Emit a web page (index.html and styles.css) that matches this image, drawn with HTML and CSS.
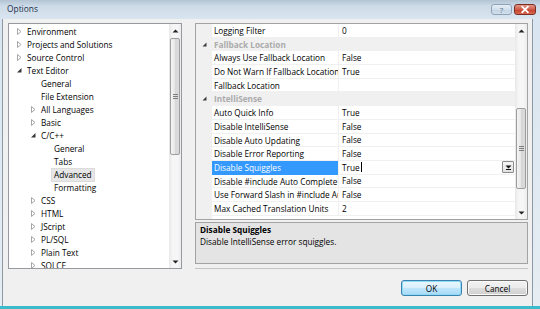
FILE: index.html
```html
<!DOCTYPE html>
<html>
<head>
<meta charset="utf-8">
<title>Options</title>
<link rel="stylesheet" href="styles.css">
</head>
<body>
<div class="window">
  <div class="titlebar">
    <span class="title">Options</span>
    <div class="caption-btns">
      <div class="cbtn help">?</div>
      <div class="cbtn close">
        <svg width="22" height="11" viewBox="0 0 22 11"><path d="M8 2.5 L14 8.5 M14 2.5 L8 8.5" stroke="#fff" stroke-width="2" stroke-linecap="square"/></svg>
      </div>
    </div>
  </div>
  <div class="frame">
    <div class="client">
      <div class="main">
        <div class="tree">
          <div class="tree-list">
            <div class="node l0"><svg class="tw" viewBox="0 0 12 13"><path d="M2.5 3.5 L6 6.5 L2.5 9.5 Z" fill="#fff" stroke="#a6a6a6"/></svg><span class="lbl">Environment</span></div>
            <div class="node l0"><svg class="tw" viewBox="0 0 12 13"><path d="M2.5 3.5 L6 6.5 L2.5 9.5 Z" fill="#fff" stroke="#a6a6a6"/></svg><span class="lbl">Projects and Solutions</span></div>
            <div class="node l0"><svg class="tw" viewBox="0 0 12 13"><path d="M2.5 3.5 L6 6.5 L2.5 9.5 Z" fill="#fff" stroke="#a6a6a6"/></svg><span class="lbl">Source Control</span></div>
            <div class="node l0"><svg class="tw" viewBox="0 0 12 13"><path d="M6.5 4 L6.5 8.5 L2 8.5 Z" fill="#3a3a3a"/></svg><span class="lbl">Text Editor</span></div>
            <div class="node l1"><span class="tw"></span><span class="lbl">General</span></div>
            <div class="node l1"><span class="tw"></span><span class="lbl">File Extension</span></div>
            <div class="node l1"><svg class="tw" viewBox="0 0 12 13"><path d="M2.5 3.5 L6 6.5 L2.5 9.5 Z" fill="#fff" stroke="#a6a6a6"/></svg><span class="lbl">All Languages</span></div>
            <div class="node l1"><svg class="tw" viewBox="0 0 12 13"><path d="M2.5 3.5 L6 6.5 L2.5 9.5 Z" fill="#fff" stroke="#a6a6a6"/></svg><span class="lbl">Basic</span></div>
            <div class="node l1"><svg class="tw" viewBox="0 0 12 13"><path d="M6.5 4 L6.5 8.5 L2 8.5 Z" fill="#3a3a3a"/></svg><span class="lbl">C/C++</span></div>
            <div class="node l2"><span class="tw"></span><span class="lbl">General</span></div>
            <div class="node l2"><span class="tw"></span><span class="lbl">Tabs</span></div>
            <div class="node l2"><span class="tw"></span><span class="lbl selected">Advanced</span></div>
            <div class="node l2"><span class="tw"></span><span class="lbl">Formatting</span></div>
            <div class="node l1"><svg class="tw" viewBox="0 0 12 13"><path d="M2.5 3.5 L6 6.5 L2.5 9.5 Z" fill="#fff" stroke="#a6a6a6"/></svg><span class="lbl">CSS</span></div>
            <div class="node l1"><svg class="tw" viewBox="0 0 12 13"><path d="M2.5 3.5 L6 6.5 L2.5 9.5 Z" fill="#fff" stroke="#a6a6a6"/></svg><span class="lbl">HTML</span></div>
            <div class="node l1"><svg class="tw" viewBox="0 0 12 13"><path d="M2.5 3.5 L6 6.5 L2.5 9.5 Z" fill="#fff" stroke="#a6a6a6"/></svg><span class="lbl">JScript</span></div>
            <div class="node l1"><svg class="tw" viewBox="0 0 12 13"><path d="M2.5 3.5 L6 6.5 L2.5 9.5 Z" fill="#fff" stroke="#a6a6a6"/></svg><span class="lbl">PL/SQL</span></div>
            <div class="node l1"><svg class="tw" viewBox="0 0 12 13"><path d="M2.5 3.5 L6 6.5 L2.5 9.5 Z" fill="#fff" stroke="#a6a6a6"/></svg><span class="lbl">Plain Text</span></div>
            <div class="node l1"><svg class="tw" viewBox="0 0 12 13"><path d="M2.5 3.5 L6 6.5 L2.5 9.5 Z" fill="#fff" stroke="#a6a6a6"/></svg><span class="lbl">SOLCE</span></div>
          </div>
          <div class="vscroll tree-scroll">
            <div class="sarrow"><svg width="7" height="4" viewBox="0 0 7 4"><path d="M0.5 3.5 L3.5 0.5 L6.5 3.5 Z" fill="#222"/></svg></div>
            <div class="track"><div class="thumb tree-thumb"><span class="grip"></span></div></div>
            <div class="sarrow"><svg width="7" height="4" viewBox="0 0 7 4"><path d="M0.5 0.5 L3.5 3.5 L6.5 0.5 Z" fill="#222"/></svg></div>
          </div>
        </div>

        <div class="props">
          <div class="grid">
            <div class="rows">
              <div class="prow"><div class="gut"></div><div class="pname">Logging Filter</div><div class="pval">0</div></div>
              <div class="prow cat"><div class="gut"><svg width="16" height="13" viewBox="0 0 16 13"><path d="M10.5 4.5 L10.5 8.5 L6.5 8.5 Z" fill="#3a3a3a"/></svg></div><div class="cname">Fallback Location</div></div>
              <div class="prow"><div class="gut"></div><div class="pname">Always Use Fallback Location</div><div class="pval">False</div></div>
              <div class="prow"><div class="gut"></div><div class="pname">Do Not Warn If Fallback Location</div><div class="pval">True</div></div>
              <div class="prow"><div class="gut"></div><div class="pname">Fallback Location</div><div class="pval"></div></div>
              <div class="prow cat"><div class="gut"><svg width="16" height="13" viewBox="0 0 16 13"><path d="M10.5 4.5 L10.5 8.5 L6.5 8.5 Z" fill="#3a3a3a"/></svg></div><div class="cname">IntelliSense</div></div>
              <div class="prow"><div class="gut"></div><div class="pname">Auto Quick Info</div><div class="pval">True</div></div>
              <div class="prow"><div class="gut"></div><div class="pname">Disable IntelliSense</div><div class="pval">False</div></div>
              <div class="prow"><div class="gut"></div><div class="pname">Disable Auto Updating</div><div class="pval">False</div></div>
              <div class="prow"><div class="gut"></div><div class="pname">Disable Error Reporting</div><div class="pval">False</div></div>
              <div class="prow sel"><div class="gut"></div><div class="pname">Disable Squiggles</div><div class="pval"><span>True</span><span class="caret"></span><span class="dd"><svg width="7" height="5" viewBox="0 0 7 5"><path d="M0.5 0.5 L6.5 0.5 L3.5 3.5 Z" fill="#111"/><path d="M1 4.5 L6 4.5" stroke="#111"/></svg></span></div></div>
              <div class="prow"><div class="gut"></div><div class="pname">Disable #include Auto Complete</div><div class="pval">False</div></div>
              <div class="prow"><div class="gut"></div><div class="pname">Use Forward Slash in #include Auto Complete</div><div class="pval">False</div></div>
              <div class="prow"><div class="gut"></div><div class="pname">Max Cached Translation Units</div><div class="pval">2</div></div>
            </div>
            <div class="vscroll grid-scroll">
              <div class="sarrow"><svg width="7" height="4" viewBox="0 0 7 4"><path d="M0.5 3.5 L3.5 0.5 L6.5 3.5 Z" fill="#222"/></svg></div>
              <div class="track"><div class="thumb grid-thumb"><span class="grip"></span></div></div>
              <div class="sarrow"><svg width="7" height="4" viewBox="0 0 7 4"><path d="M0.5 0.5 L3.5 3.5 L6.5 0.5 Z" fill="#222"/></svg></div>
            </div>
          </div>
          <div class="desc">
            <div class="desc-title">Disable Squiggles</div>
            <div class="desc-text">Disable IntelliSense error squiggles.</div>
          </div>
          <div class="props-foot"></div>
        </div>
      </div>
      <div class="buttons">
        <button class="btn default">OK</button>
        <button class="btn">Cancel</button>
      </div>
    </div>
  </div>
</div>
</body>
</html>
```
FILE: styles.css
```css
* { box-sizing: border-box; margin: 0; padding: 0; }
html, body { width: 540px; height: 309px; overflow: hidden; }
body {
  font-family: "Open Sans", "Liberation Sans", sans-serif;
  font-size: 8.25px;
  color: #000;
  background: #fff;
}

.window {
  width: 540px;
  height: 309px;
  display: flex;
  flex-direction: column;
  background: linear-gradient(#b3c3d3 0, #cddbe8 6px, #d9e5f0 19px, #e6edf3 100%);
  border-bottom: 3px solid #3bbccc;
}

.titlebar {
  height: 19px;
  flex: none;
  display: flex;
  align-items: flex-start;
  padding: 0 4px 0 7px;
}
.title {
  line-height: 18px;
  font-size: 8.4px;
  color: #1a2f4a;
}
.caption-btns {
  margin-left: auto;
  display: flex;
  gap: 2px;
  padding-top: 4px;
}
.cbtn {
  height: 11px;
  border-radius: 3px;
  display: flex;
  align-items: center;
  justify-content: center;
}
.help {
  width: 21px;
  border: 1px solid #8fa3b8;
  background: linear-gradient(#e6eef6, #d2dfec 50%, #c3d3e3 51%, #d3e0ec);
  color: #5c7089;
  font-size: 8px;
  line-height: 9px;
}
.close {
  width: 22px;
  border: 1px solid #7b2d22;
  background: linear-gradient(#e3988a, #cf5a48 50%, #c33f2c 51%, #d76a52);
}
.close svg { display: block; }

.frame {
  flex: 1;
  padding: 0 7px 0 2px;
  display: flex;
}
.client {
  flex: 1;
  background: #f0f0f0;
  border-left: 1px solid #8d9aa6;
  border-right: 1px solid #8d9aa6;
  padding: 4px 4px 0 5px;
  display: flex;
  flex-direction: column;
}

.main {
  height: 246px;
  display: flex;
  gap: 13px;
}

/* tree */
.tree {
  width: 174px;
  height: 246px;
  border: 1px solid #969a9e;
  background: #fff;
  display: flex;
  overflow: hidden;
}
.tree-list {
  flex: 1;
  padding-top: 1px;
  overflow: hidden;
}
.node {
  height: 13px;
  line-height: 13px;
  display: flex;
  align-items: center;
  white-space: nowrap;
  color: #000;
}
.node.l0 { padding-left: 6px; }
.node.l1 { padding-left: 20px; }
.node.l2 { padding-left: 33px; }
.tw { width: 12px; height: 13px; flex: none; display: block; }
.lbl { padding: 0 2px; margin-left: -2px; line-height: 12px; }
.lbl.selected { background: #e6e6e6; outline: 1px solid #dcdcdc; }

/* scrollbars */
.vscroll {
  width: 12px;
  flex: none;
  display: flex;
  flex-direction: column;
  background: linear-gradient(90deg, #e8e8e8, #f6f6f6 30%, #f6f6f6 70%, #ececec);
}
.sarrow {
  height: 13px;
  flex: none;
  display: flex;
  align-items: center;
  justify-content: center;
}
.sarrow svg { display: block; }
.track { flex: 1; display: flex; flex-direction: column; }
.thumb {
  margin-left: 1px;
  width: 10px;
  border: 1px solid #9d9d9d;
  border-radius: 2px;
  background: linear-gradient(90deg, #f4f4f4, #e6e6e6 50%, #d6d6d6 51%, #dcdcdc);
  display: flex;
  align-items: center;
  justify-content: center;
}
.tree-thumb { margin-top: 1px; height: 117px; }
.grid-thumb { margin-top: 71px; height: 81px; }
.grip {
  width: 5px;
  height: 5px;
  background: repeating-linear-gradient(#7d7d7d 0 1px, transparent 1px 2px);
}

/* property grid */
.props {
  width: 333px;
  display: flex;
  flex-direction: column;
}
.grid {
  height: 197px;
  flex: none;
  border: 1px solid #a3a3a3;
  background: #fff;
  display: flex;
  overflow: hidden;
}
.rows {
  flex: 1;
  background: linear-gradient(90deg, #f0f0f0 16px, #fff 16px);
  overflow: hidden;
}
.prow {
  height: 13.7px;
  display: flex;
  white-space: nowrap;
  line-height: 13px;
}
.gut { width: 16px; flex: none; background: #f0f0f0; }
.gut svg { display: block; }
.pname {
  width: 126px;
  flex: none;
  padding-left: 2px;
  overflow: hidden;
  text-overflow: clip;
  border-bottom: 1px solid #f0f0f0;
  color: #000;
}
.pval {
  flex: 1;
  padding-left: 3px;
  border-left: 1px solid #f0f0f0;
  border-bottom: 1px solid #f0f0f0;
  display: flex;
  align-items: center;
  color: #000;
}
.prow.cat { background: #f0f0f0; }
.cname {
  padding-left: 2px;
  font-weight: bold;
  color: #ababab;
}
.prow.sel .pname { background: #3399ff; color: #fff; border-bottom-color: #3399ff; }
.caret { width: 1px; height: 10px; background: #000; margin-left: 1px; }
.dd {
  margin-left: auto;
  margin-right: 1px;
  width: 12px;
  height: 12px;
  border: 1px solid #8a8a8a;
  border-radius: 1px;
  background: linear-gradient(#f6f6f6, #e2e2e2);
  display: flex;
  align-items: center;
  justify-content: center;
}
.dd svg { display: block; }

.desc {
  margin-top: 2px;
  height: 42px;
  flex: none;
  border: 1px solid #a3a3a3;
  background: #e4e4e4;
  padding: 1px 0 0 4px;
  line-height: 12px;
}
.desc-title { font-weight: bold; color: #000; }
.desc-text { color: #000; }
.props-foot {
  margin-top: 4px;
  height: 1px;
  background: #c4c4c4;
}

/* buttons */
.buttons {
  margin-top: 11px;
  display: flex;
  justify-content: flex-end;
  gap: 5px;
}
.btn {
  width: 61px;
  height: 16px;
  font-family: inherit;
  font-size: 8.25px;
  color: #000;
  border: 1px solid #707070;
  border-radius: 3px;
  background: linear-gradient(#f2f2f2, #ebebeb 50%, #dddddd 51%, #cfcfcf);
  box-shadow: inset 0 0 0 1px #fbfbfb;
}
.btn.default {
  border-color: #3c7fb1;
  box-shadow: inset 0 0 0 1px #8fdcf5;
  background: linear-gradient(#eaf6fd, #d9f0fc 50%, #bee6fd 51%, #a7d9f5);
}
```
